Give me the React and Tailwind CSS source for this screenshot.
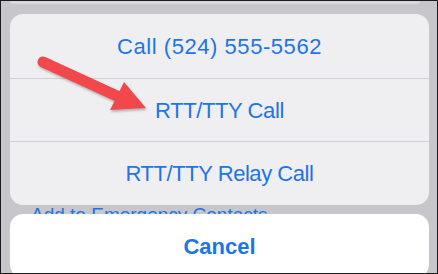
const rows = [
  { label: 'Call (524) 555-5562', h: 'h-[64px]', track: 'tracking-[0.55px]' },
  { label: 'RTT/TTY Call', h: 'h-[63px]', track: 'tracking-[-0.4px]' },
  { label: 'RTT/TTY Relay Call', h: 'h-[64px]', track: 'tracking-[-0.45px]' },
];

export default function App() {
  return (
    <div className="relative w-[438px] h-[274px] overflow-hidden border border-[#1c1c1c] bg-[#c6c6cb] font-['Liberation_Sans',Arial,sans-serif]">
      <div className="flex flex-col pl-[9px] pr-[8px]">
        {/* bottom edge of the card behind */}
        <div className="h-[3px] mr-[9px] rounded-b-[10px] bg-[#d8d8dc]" />

        {/* action sheet */}
        <div className="mt-[10px] rounded-[13px] bg-[#efeff2] overflow-hidden">
          {rows.map((row, i) => (
            <div
              key={i}
              className={`${row.h} ${row.track} flex items-center justify-center text-[22px] text-[#1f74e6] ${i > 0 ? 'border-t border-[#cfcfd4]' : ''}`}
            >
              {row.label}
            </div>
          ))}
        </div>

        {/* list item peeking through behind the sheet */}
        <div className="h-[9px] overflow-hidden pl-[21px]">
          <p className="text-[19px] leading-none text-[#1f74e6] whitespace-nowrap">Add to Emergency Contacts</p>
        </div>

        <div className="h-[64px] rounded-[13px] bg-white flex items-center justify-center text-[22px] font-bold text-[#1f74e6]">
          Cancel
        </div>
      </div>

      {/* red annotation arrow */}
      <svg
        className="absolute inset-0 pointer-events-none drop-shadow-[1px_2px_1px_rgba(0,0,0,0.25)]"
        width="438"
        height="274"
        viewBox="0 0 438 274"
      >
        <line x1="42" y1="61" x2="116" y2="95" stroke="#f2474b" strokeWidth="11" strokeLinecap="round" />
        <polygon points="123,81 109,109 145,107" fill="#f2474b" />
      </svg>
    </div>
  );
}
